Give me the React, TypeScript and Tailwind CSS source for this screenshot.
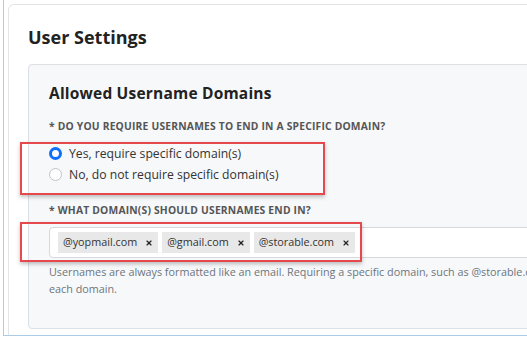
import { X } from "lucide-react";

const domains = ["@yopmail.com", "@gmail.com", "@storable.com"];

const heading = { fontFamily: '"Open Sans", "Liberation Sans", sans-serif' };

export default function App() {
  return (
    <div className="relative w-[527px] h-[337px] overflow-hidden bg-white" style={{ fontFamily: '"Open Sans", "Liberation Sans", sans-serif' }}>
      <div className="ml-[3px] h-[336px] border-l border-b border-[#a9cde9] pl-[4px] pt-[4px] overflow-hidden">
        <div className="h-[340px] -mr-[20px] rounded-md border border-[#e4e4e4] bg-white pl-[19px] pt-[20px]">
          <h1 className="text-[18px] leading-[24px] font-bold text-[#222]" style={heading}>
            User Settings
          </h1>

          <div className="mt-[15px] h-[265px] rounded-[4px] border border-[#dcdfe3] bg-[#f7f8fa] pl-[20px] pt-[18px]">
            <h2 className="text-[15.5px] leading-[20px] font-bold text-[#222] tracking-[0.2px]" style={heading}>
              Allowed Username Domains
            </h2>

            <p className="mt-[17px] text-[10.3px] leading-[12px] font-bold tracking-[0.2px] text-[#555] whitespace-nowrap">
              * DO YOU REQUIRE USERNAMES TO END IN A SPECIFIC DOMAIN?
            </p>

            <div className="mt-[14px] flex flex-col gap-[6px]">
              <label className="flex items-center gap-[7px] text-[12.2px] leading-[15px] text-[#333]">
                <span className="w-[13px] h-[13px] rounded-full border-[3.5px] border-[#0d6efd] bg-white" />
                Yes, require specific domain(s)
              </label>
              <label className="flex items-center gap-[7px] text-[12.2px] leading-[15px] text-[#333]">
                <span className="w-[13px] h-[13px] rounded-full border border-[#c4c4c4] bg-white" />
                No, do not require specific domain(s)
              </label>
            </div>

            <p className="mt-[22px] text-[10.3px] leading-[12px] font-bold tracking-[0.2px] text-[#555] whitespace-nowrap">
              * WHAT DOMAIN(S) SHOULD USERNAMES END IN?
            </p>

            <div className="mt-[11px] h-[31px] -mr-[40px] flex items-center gap-[4px] rounded-[4px] border border-[#d5d8dc] bg-white pl-[8px]">
              {domains.map((d) => (
                <span key={d} className="flex items-center h-[21px] gap-[8px] bg-[#e8e8e8] pl-[5px] pr-[5px] text-[10.8px] text-[#333]">
                  {d}
                  <X size={8} strokeWidth={3.5} className="text-[#222]" />
                </span>
              ))}
            </div>

            <p className="mt-[5px] text-[10.8px] leading-[17px] text-[#6c757d] whitespace-nowrap">
              Usernames are always formatted like an email. Requiring a specific domain, such as @storable.com, will allow
              <br />
              each domain.
            </p>
          </div>
        </div>
      </div>

      <div className="absolute left-[20px] top-[142px] w-[305px] h-[53px] border-2 border-[#e5484d] shadow-[0_2px_4px_rgba(0,0,0,0.25)]" />
      <div className="absolute left-[20px] top-[222px] w-[342px] h-[40px] border-2 border-[#e5484d] shadow-[0_2px_4px_rgba(0,0,0,0.25)]" />
    </div>
  );
}
